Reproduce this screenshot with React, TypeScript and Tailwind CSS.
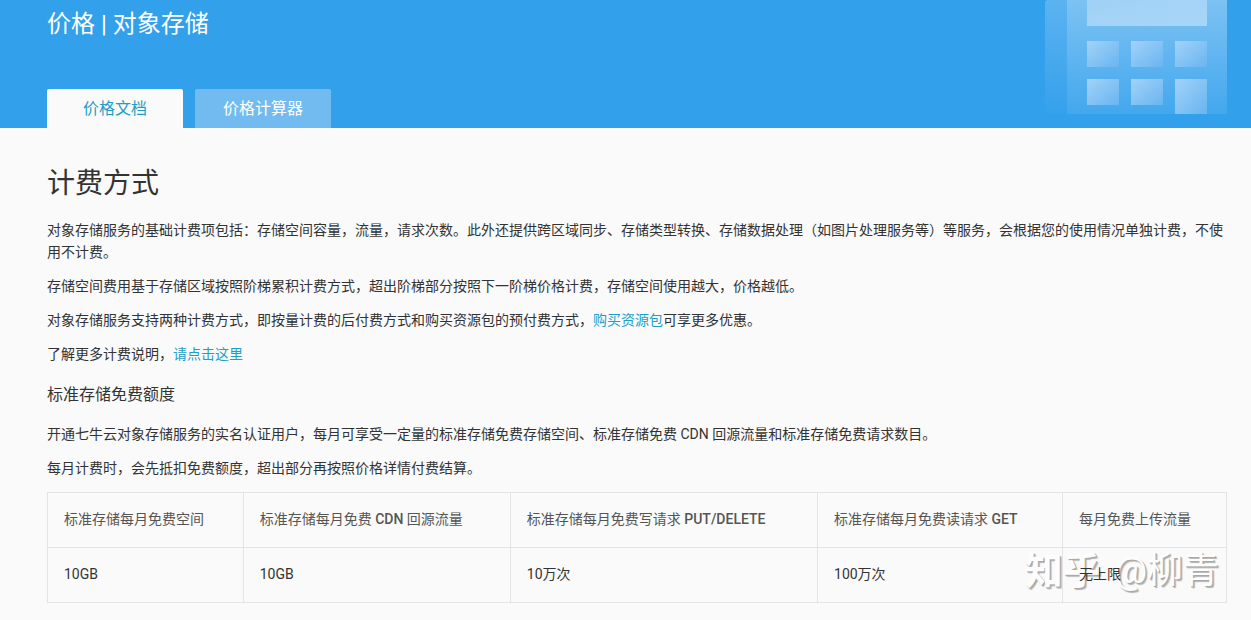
const tabs = [
  { name: "价格文档", active: true },
  { name: "价格计算器", active: false },
];

const quotas = [
  { title: "标准存储每月免费空间", value: "10GB" },
  {
    title: (
      <>
        标准存储每月免费 <span className="font-medium">CDN</span> 回源流量
      </>
    ),
    value: "10GB",
  },
  {
    title: (
      <>
        标准存储每月免费写请求 <span className="font-medium">PUT/DELETE</span>
      </>
    ),
    value: "10万次",
  },
  {
    title: (
      <>
        标准存储每月免费读请求 <span className="font-medium">GET</span>
      </>
    ),
    value: "100万次",
  },
  { title: "每月免费上传流量", value: "无上限" },
];

const keys = [
  { x: 42, y: 41, height: 26 },
  { x: 86, y: 41, height: 26 },
  { x: 130, y: 41, height: 26 },
  { x: 42, y: 79, height: 26 },
  { x: 86, y: 79, height: 26 },
  { x: 130, y: 79, height: 35 },
];

function CalculatorArt() {
  return (
    <svg
      className="absolute top-0 right-6"
      width="182"
      height="114"
      viewBox="0 0 182 114"
      aria-hidden="true"
    >
      <defs>
        <linearGradient id="side" x1="0" y1="0" x2="0" y2="1">
          <stop offset="0" stopColor="#fff" stopOpacity="0.2" />
          <stop offset="1" stopColor="#fff" stopOpacity="0.01" />
        </linearGradient>
        <linearGradient id="body" x1="0" y1="0" x2="0" y2="1">
          <stop offset="0" stopColor="#fff" stopOpacity="0.36" />
          <stop offset="1" stopColor="#fff" stopOpacity="0.08" />
        </linearGradient>
        <linearGradient id="key" x1="0" y1="0" x2="1" y2="1">
          <stop offset="0" stopColor="#a3d2f7" />
          <stop offset="1" stopColor="#68b5f1" />
        </linearGradient>
        <linearGradient id="screen" x1="0" y1="0" x2="1" y2="1">
          <stop offset="0" stopColor="#a0d1f6" />
          <stop offset="1" stopColor="#a8d6f8" />
        </linearGradient>
      </defs>
      <path d="M0 2 L2 0 H22 V114 H0 Z" fill="url(#side)" />
      <rect x="22" width="160" height="114" fill="url(#body)" />
      <rect x="42" width="120" height="26" fill="url(#screen)" />
      {keys.map((key) => (
        <rect
          key={`${key.x}-${key.y}`}
          x={key.x}
          y={key.y}
          width="32"
          height={key.height}
          fill="url(#key)"
        />
      ))}
    </svg>
  );
}

function PageHeader() {
  return (
    <header className="relative bg-[#33a0ec] pt-1.5 pr-6 pl-[47px]">
      <CalculatorArt />
      <h1 className="text-2xl leading-9 text-white">价格 | 对象存储</h1>
      <nav className="mt-[47px] flex gap-3">
        {tabs.map((tab) => (
          <button
            key={tab.name}
            type="button"
            className={
              tab.active
                ? "h-[39px] w-[136px] rounded-t-xs bg-[#fafafa] text-base text-[#1c9fc9]"
                : "h-[39px] w-[136px] rounded-t-xs bg-[#72bbf1] text-base text-white"
            }
          >
            {tab.name}
          </button>
        ))}
      </nav>
    </header>
  );
}

function QuotaTable() {
  return (
    <table className="relative z-10 w-full border-collapse text-left">
      <thead>
        <tr>
          {quotas.map((quota, idx) => (
            <th
              key={idx}
              className="border border-[#e4e4e4] px-4 pt-[15px] pb-[17px] font-normal text-[#555]"
            >
              {quota.title}
            </th>
          ))}
        </tr>
      </thead>
      <tbody>
        <tr>
          {quotas.map((quota, idx) => (
            <td
              key={idx}
              className="border border-[#e4e4e4] px-4 pt-[15px] pb-[17px]"
            >
              {quota.value}
            </td>
          ))}
        </tr>
      </tbody>
    </table>
  );
}

export default function App() {
  return (
    <div className="min-h-screen bg-[#fafafa] font-['Roboto','Noto_Sans_CJK_SC',sans-serif] text-[#333]">
      <PageHeader />
      <main className="relative pt-9 pr-6 pb-4 pl-[47px] text-sm leading-[22px]">
        <h2 className="mb-[15px] text-[28px] leading-10">计费方式</h2>
        <div className="space-y-3">
          <p>
            对象存储服务的基础计费项包括：存储空间容量，流量，请求次数。此外还提供跨区域同步、存储类型转换、存储数据处理（如图片处理服务等）等服务，会根据您的使用情况单独计费，不使用不计费。
          </p>
          <p>
            存储空间费用基于存储区域按照阶梯累积计费方式，超出阶梯部分按照下一阶梯价格计费，存储空间使用越大，价格越低。
          </p>
          <p>
            对象存储服务支持两种计费方式，即按量计费的后付费方式和购买资源包的预付费方式，
            <a href="#package" className="text-[#1c9fc9]">
              购买资源包
            </a>
            可享更多优惠。
          </p>
          <p>
            了解更多计费说明，
            <a href="#details" className="text-[#1c9fc9]">
              请点击这里
            </a>
          </p>
        </div>
        <h3 className="mt-[17px] mb-[15px] text-base leading-[26px]">
          标准存储免费额度
        </h3>
        <div className="mb-[13px] space-y-3">
          <p>
            开通七牛云对象存储服务的实名认证用户，每月可享受一定量的标准存储免费存储空间、标准存储免费 CDN 回源流量和标准存储免费请求数目。
          </p>
          <p>每月计费时，会先抵扣免费额度，超出部分再按照价格详情付费结算。</p>
        </div>
        <QuotaTable />
        <div className="absolute right-8 bottom-7 flex items-center gap-3.5 text-4xl leading-10 whitespace-nowrap text-[#fdfdfd] [text-shadow:1px_1px_0_#a8a8a8,2px_2px_1px_#b4b4b4]">
          <span className="text-[38px] font-bold">知乎</span>
          <span>@柳青</span>
        </div>
      </main>
    </div>
  );
}
